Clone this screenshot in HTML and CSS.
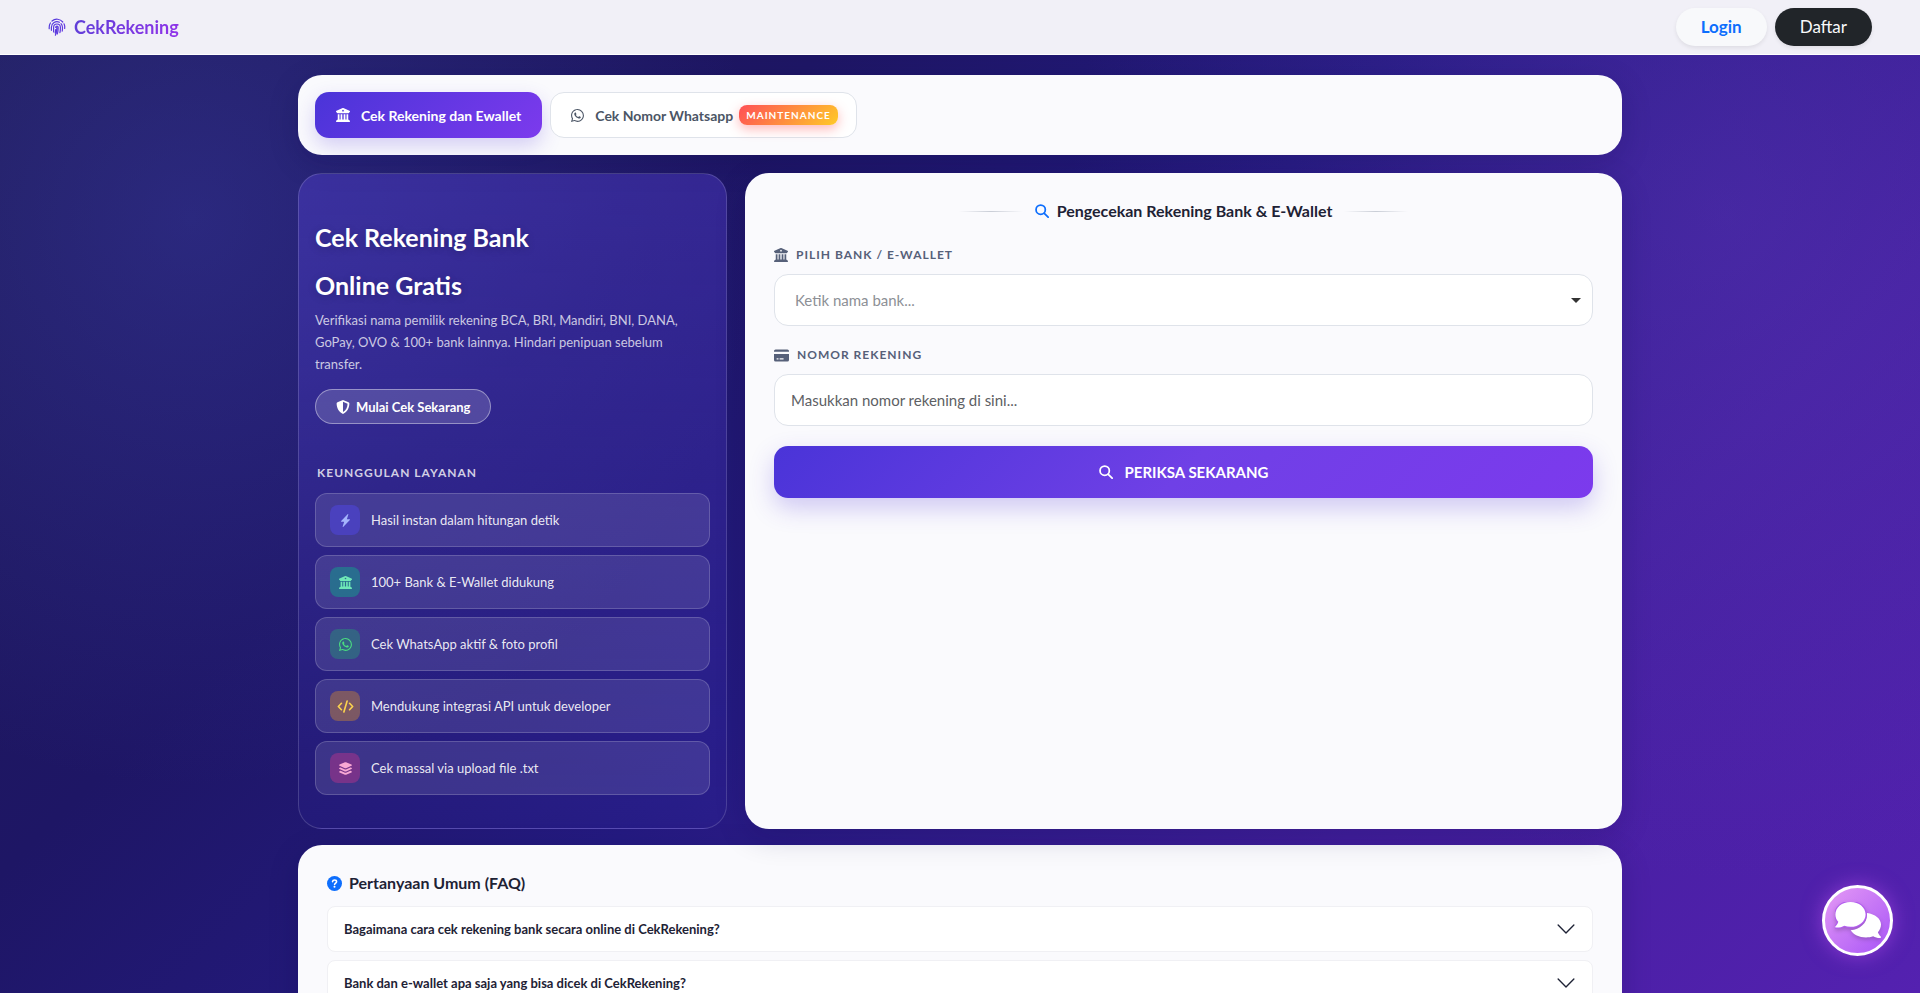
FILE: index.html
```
<!DOCTYPE html>
<html lang="id">
<head>
    <meta charset="UTF-8">
    <meta name="viewport" content="width=device-width, initial-scale=1.0">
    <title>CekRekening</title>
    <link rel="stylesheet" href="styles.css">
</head>
<body>
    <!-- icon set -->
    <svg class="sprite" aria-hidden="true">
        <defs>
            <linearGradient id="brandFill" gradientUnits="userSpaceOnUse" x1="0" y1="0" x2="60" y2="20">
                <stop offset="0" stop-color="#4f3bdb"/>
                <stop offset="1" stop-color="#9333ea"/>
            </linearGradient>
        </defs>
        <symbol id="i-bank" viewBox="0 0 512 512">
            <path d="M243.4 2.6l-224 96c-14 6-21.8 21-18.7 35.8S16.8 160 32 160v8c0 13.3 10.7 24 24 24H456c13.3 0 24-10.7 24-24v-8c15.2 0 28.3-10.7 31.3-25.6s-4.8-29.9-18.7-35.8l-224-96c-8-3.4-17.2-3.4-25.2 0zM128 224H64V420.3c-.6 .3-1.2 .7-1.8 1.1l-48 32c-11.7 7.8-17 22.4-12.9 35.9S17.9 512 32 512H480c14.1 0 26.5-9.2 30.6-22.7s-1.1-28.1-12.9-35.9l-48-32c-.6-.4-1.2-.7-1.8-1.1V224H384V416H344V224H280V416H232V224H168V416H128V224zM256 64a32 32 0 1 1 0 64 32 32 0 1 1 0-64z"/>
        </symbol>
        <symbol id="i-whatsapp" viewBox="0 0 16 16">
            <path d="M13.601 2.326A7.85 7.85 0 0 0 7.994 0C3.627 0 .068 3.558.064 7.926c0 1.399.366 2.76 1.057 3.965L0 16l4.204-1.102a7.9 7.9 0 0 0 3.79.965h.004c4.368 0 7.926-3.558 7.93-7.93A7.9 7.9 0 0 0 13.6 2.326zM7.994 14.521a6.6 6.6 0 0 1-3.356-.92l-.24-.144-2.494.654.666-2.433-.156-.251a6.56 6.56 0 0 1-1.007-3.505c0-3.626 2.957-6.584 6.591-6.584a6.56 6.56 0 0 1 4.66 1.931 6.56 6.56 0 0 1 1.928 4.66c-.004 3.639-2.961 6.592-6.592 6.592m3.615-4.934c-.197-.099-1.17-.578-1.353-.646-.182-.065-.315-.099-.445.099-.133.197-.513.646-.627.775-.114.133-.232.148-.43.05-.197-.1-.836-.308-1.592-.985-.59-.525-.985-1.175-1.103-1.372-.114-.198-.011-.304.088-.403.087-.088.197-.232.296-.346.1-.114.133-.198.198-.33.065-.134.034-.248-.015-.347-.05-.099-.445-1.076-.612-1.47-.16-.389-.323-.335-.445-.34-.114-.007-.247-.007-.38-.007a.73.73 0 0 0-.529.247c-.182.198-.691.677-.691 1.654s.71 1.916.81 2.049c.098.133 1.394 2.132 3.383 2.992.47.205.84.326 1.129.418.475.152.904.129 1.246.08.38-.058 1.171-.48 1.338-.943.164-.464.164-.86.114-.943-.049-.084-.182-.133-.38-.232z"/>
        </symbol>
        <symbol id="i-search" viewBox="0 0 16 16">
            <g fill="none" stroke="currentColor" stroke-width="2" stroke-linecap="round">
                <circle cx="6.5" cy="6.5" r="5.3"/>
                <path d="M10.6 10.6 15 15"/>
            </g>
        </symbol>
        <symbol id="i-shield" viewBox="0 0 16 16">
            <path fill-rule="evenodd" d="M8 0l6.3 2.6c.6.3 1 .8 1 1.500C15.200 8.700 13.300 13.500 8 16 2.700 13.500.8 8.700.7 4.100c0-.7.4-1.200 1-1.500zM8 2.100v11.600c3.700-2 5.100-5.600 5.200-9.400z"/>
        </symbol>
        <symbol id="i-bolt" viewBox="0 0 16 16">
            <path d="M11.251.068a.5.5 0 0 1 .227.58L9.677 6.5H13a.5.5 0 0 1 .364.843l-8 8.5a.5.5 0 0 1-.842-.49L6.323 9.5H3a.5.5 0 0 1-.364-.843l8-8.5a.5.5 0 0 1 .615-.09z"/>
        </symbol>
        <symbol id="i-code" viewBox="0 0 20 16">
            <path fill="none" stroke="currentColor" stroke-width="2" stroke-linecap="round" stroke-linejoin="round" d="M5 4 1.200 8 5 12M15 4l3.800 4-3.800 4M12 1.200 8 14.800"/>
        </symbol>
        <symbol id="i-layers" viewBox="0 0 16 16">
            <path d="M7.300.3a2 2 0 0 1 1.400 0l6.600 2.900a.8.8 0 0 1 0 1.500L8.700 7.600a2 2 0 0 1-1.400 0L.7 4.700a.8.8 0 0 1 0-1.500z"/>
            <path d="m1.900 6.700-1.200.5a.8.8 0 0 0 0 1.500l6.600 2.900a2 2 0 0 0 1.400 0l6.600-2.900a.8.8 0 0 0 0-1.500l-1.200-.5L9.300 8.900a3.200 3.200 0 0 1-2.600 0z"/>
            <path d="m1.900 10.800-1.200.5a.8.8 0 0 0 0 1.500l6.600 2.900a2 2 0 0 0 1.400 0l6.600-2.900a.8.8 0 0 0 0-1.500l-1.200-.5L9.300 13a3.200 3.200 0 0 1-2.600 0z"/>
        </symbol>
        <symbol id="i-card" viewBox="0 0 16 16">
            <path fill-rule="evenodd" d="M0 4V3.200A1.700 1.700 0 0 1 1.700 1.500h12.600A1.700 1.700 0 0 1 16 3.200V4zM0 6.500h16v6.300a1.700 1.700 0 0 1-1.700 1.700H1.700A1.700 1.700 0 0 1 0 12.800zM2.800 11v1.200h2V11zm3.200 0v1.200h4.200V11z"/>
        </symbol>
        <symbol id="i-question" viewBox="0 0 16 16">
            <circle cx="8" cy="8" r="8"/>
            <path fill="none" stroke="#fff" stroke-width="1.700" stroke-linecap="round" d="M5.900 6.100c.2-1.400 1.100-1.900 2.200-1.900 1.200 0 2.100.7 2.100 1.800 0 1.400-1.900 1.500-2.100 2.900"/>
            <circle cx="8" cy="11.500" r="1.100" fill="#fff"/>
        </symbol>
        <symbol id="i-fingerprint" viewBox="0 0 18 18">
            <g fill="none" stroke="url(#brandFill)" stroke-width="1.200" stroke-linecap="round">
                <path d="M4 3A7.600 7.600 0 0 1 14.800 4M2.400 5A7.600 7.600 0 0 0 1.200 9.500v1.200M16 5.800a7.600 7.600 0 0 1 .7 4.700"/>
                <path d="M3.400 12.300V9.300a5.600 5.600 0 0 1 8-5M13 5.600a5.600 5.600 0 0 1 1.500 4c0 1.300 0 2.300-.3 3.500"/>
                <path d="M5.600 14V9.400a3.400 3.400 0 0 1 6.800 0c0 2 0 3.500-.5 5.300M7.700 9.400c0-1.700 2.500-1.700 2.500 0 0 2.400-.2 4.400-.9 6.600M8.900 9.600c0 3-.5 5.500-1.500 7.600M7.600 11.500c0 1.300-.1 2.400-.4 3.500"/>
            </g>
        </symbol>
        <symbol id="i-chat" viewBox="0 0 46 37">
            <path d="M32 13c0 8-7 14.500-16.300 15.200C18.400 32.500 24.200 35.400 31 35.400c2.600 0 5.100-.4 7.200-1.200 2 1.200 4.400 1.900 7 1.800.8 0 1-.9.500-1.400-1.500-1.500-2.400-3.100-2.800-4.400 2-2.200 3.100-4.800 3.100-7.700C46 16.700 40 12 32 11z"/>
            <path stroke="#b35cf0" stroke-width="2.400" paint-order="stroke" d="M15.500 0C24 0 30.600 5.500 30.600 12.400S24 24.800 15.500 24.800c-2.200 0-4.300-.4-6.200-1.100C7 25 4.400 25.700 1 25.600c-.8 0-1-.9-.5-1.400 1.500-1.500 2.400-3 2.800-4.500C1.400 17.700.4 15.200.4 12.400.400 5.500 7 0 15.500 0z"/>
        </symbol>
        <symbol id="i-chevron" viewBox="0 0 16 16">
            <path fill="none" stroke="currentColor" stroke-width="1.200" stroke-linecap="round" stroke-linejoin="round" d="m1 4.500 7 7 7-7"/>
        </symbol>
    </svg>

    <header class="navbar">
        <a class="brand" href="#">
            <svg class="brand-icon"><use href="#i-fingerprint"/></svg>
            <span>CekRekening</span>
        </a>
        <nav class="nav-actions">
            <a class="btn-pill btn-login" href="#">Login</a>
            <a class="btn-pill btn-daftar" href="#">Daftar</a>
        </nav>
    </header>

    <main class="container">
        <div class="tabs card">
            <button type="button" class="tab active">
                <svg class="icon"><use href="#i-bank"/></svg>
                <span>Cek Rekening dan Ewallet</span>
            </button>
            <button type="button" class="tab">
                <svg class="icon icon-thin"><use href="#i-whatsapp"/></svg>
                <span>Cek Nomor Whatsapp</span>
                <span class="badge">MAINTENANCE</span>
            </button>
        </div>

        <div class="main-grid">
            <section class="hero">
                <h1>Cek Rekening Bank<br>Online Gratis</h1>
                <p>Verifikasi nama pemilik rekening BCA, BRI, Mandiri, BNI, DANA, GoPay, OVO &amp; 100+ bank lainnya. Hindari penipuan sebelum transfer.</p>
                <a class="hero-btn" href="#formCek">
                    <svg class="icon"><use href="#i-shield"/></svg>
                    Mulai Cek Sekarang
                </a>

                <h2>KEUNGGULAN LAYANAN</h2>
                <ul class="features">
                    <li>
                        <span class="feature-icon indigo"><svg><use href="#i-bolt"/></svg></span>
                        Hasil instan dalam hitungan detik
                    </li>
                    <li>
                        <span class="feature-icon teal"><svg><use href="#i-bank"/></svg></span>
                        100+ Bank &amp; E-Wallet didukung
                    </li>
                    <li>
                        <span class="feature-icon green"><svg><use href="#i-whatsapp"/></svg></span>
                        Cek WhatsApp aktif &amp; foto profil
                    </li>
                    <li>
                        <span class="feature-icon amber"><svg class="wide"><use href="#i-code"/></svg></span>
                        Mendukung integrasi API untuk developer
                    </li>
                    <li>
                        <span class="feature-icon pink"><svg><use href="#i-layers"/></svg></span>
                        Cek massal via upload file .txt
                    </li>
                </ul>
            </section>

            <form class="card check-form" id="formCek">
                <h2 class="form-title">
                    <svg class="icon"><use href="#i-search"/></svg>
                    Pengecekan Rekening Bank &amp; E-Wallet
                </h2>

                <label for="bank">
                    <svg class="icon"><use href="#i-bank"/></svg>
                    PILIH BANK / E-WALLET
                </label>
                <select id="bank">
                    <option>Ketik nama bank...</option>
                </select>

                <label for="norek">
                    <svg class="icon icon-card"><use href="#i-card"/></svg>
                    NOMOR REKENING
                </label>
                <input type="text" id="norek" inputmode="numeric" placeholder="Masukkan nomor rekening di sini...">

                <button type="submit" class="btn-submit">
                    <svg class="icon"><use href="#i-search"/></svg>
                    PERIKSA SEKARANG
                </button>
            </form>
        </div>

        <section class="card faq">
            <h2>
                <svg class="icon"><use href="#i-question"/></svg>
                Pertanyaan Umum (FAQ)
            </h2>
            <button type="button" class="faq-item">
                Bagaimana cara cek rekening bank secara online di CekRekening?
                <svg><use href="#i-chevron"/></svg>
            </button>
            <button type="button" class="faq-item">
                Bank dan e-wallet apa saja yang bisa dicek di CekRekening?
                <svg><use href="#i-chevron"/></svg>
            </button>
        </section>
    </main>

    <button type="button" class="chat-btn" aria-label="Chat">
        <svg><use href="#i-chat"/></svg>
    </button>
</body>
</html>
```
FILE: styles.css
```
:root {
    --indigo: #4a34d8;
    --violet: #7c3aed;
    --blue: #0d6efd;
    --dark: #1e2235;
    --muted: #566079;
    --line: #dfe3ea;
    --card: #fafafd;
}

* {
    box-sizing: border-box;
    margin: 0;
    padding: 0;
}

body {
    font-family: Lato, 'Open Sans', sans-serif;
    font-size: 13px;
    min-height: 100vh;
    color: var(--dark);
    background:
        radial-gradient(circle at 10% 22%, rgba(67, 70, 190, 0.35), transparent 30%),
        radial-gradient(circle at 90% 22%, rgba(96, 60, 190, 0.35), transparent 35%),
        linear-gradient(135deg, #1e1b55 0%, #1e1665 30%, #241a80 50%, #431f9e 75%, #5421b0 100%);
    background-attachment: fixed;
}

button, input, select {
    font: inherit;
    border: none;
}

button {
    cursor: pointer;
}

a {
    text-decoration: none;
}

svg {
    fill: currentColor;
    flex-shrink: 0;
}

.sprite {
    position: absolute;
    width: 0;
    height: 0;
}

.icon {
    width: 14px;
    height: 14px;
}

/* Navbar */
.navbar {
    position: sticky;
    top: 0;
    z-index: 10;
    display: flex;
    justify-content: space-between;
    align-items: center;
    height: 55px;
    padding: 0 48px;
    background: #f1f0f7;
    border-bottom: 1px solid #fff;
}

.brand {
    display: flex;
    align-items: center;
    gap: 8px;
    font-size: 18px;
    font-weight: bold;
}

.brand span {
    background: linear-gradient(135deg, #5b3fd6, #9333ea);
    -webkit-background-clip: text;
    background-clip: text;
    color: transparent;
}

.brand-icon {
    width: 18px;
    height: 18px;
}

.nav-actions {
    display: flex;
    gap: 8px;
}

.btn-pill {
    padding: 0 25px;
    line-height: 38px;
    border-radius: 19px;
    font-size: 17px;
    box-shadow: 0 2px 4px rgba(0, 0, 0, 0.08);
}

.btn-login {
    background: #f8f9fb;
    color: var(--blue);
    font-weight: bold;
}

.btn-daftar {
    background: #212529;
    color: #f8f9fa;
}

/* Layout */
.container {
    max-width: 1324px;
    margin: 0 auto;
    padding: 20px 0;
}

.card {
    background: var(--card);
    border-radius: 24px;
    box-shadow: 0 8px 30px rgba(15, 10, 70, 0.2);
}

.tabs {
    display: flex;
    gap: 8px;
    padding: 17px;
}

.tab {
    display: flex;
    align-items: center;
    height: 46px;
    padding: 0 18px 0 20px;
    border: 1px solid var(--line);
    border-radius: 14px;
    background: #fff;
    color: #4b5565;
    font-size: 14px;
    font-weight: bold;
}

.tab .icon {
    margin-right: 11px;
}

.tab .icon-thin {
    width: 13px;
    height: 13px;
}

.tab.active {
    padding: 0 21px;
    border: none;
    background: linear-gradient(135deg, var(--indigo), var(--violet));
    color: #fff;
    box-shadow: 0 8px 20px rgba(79, 52, 216, 0.22);
}

.badge {
    margin-left: 6px;
    padding: 0 7px;
    line-height: 20px;
    border-radius: 8px;
    background: linear-gradient(135deg, #ff4f56, #ffca28);
    color: #fff;
    font-size: 10px;
    letter-spacing: 1px;
    box-shadow: 0 4px 12px rgba(255, 77, 79, 0.4);
}

.main-grid {
    display: grid;
    grid-template-columns: 429fr 877fr;
    gap: 18px;
    margin: 18px 0 16px;
}

/* Hero */
.hero {
    padding: 39px 16px 33px;
    border: 1px solid rgba(255, 255, 255, 0.16);
    border-radius: 24px;
    color: #fff;
    background: linear-gradient(180deg, rgba(99, 75, 240, 0.32), rgba(60, 50, 190, 0.1));
}

.hero h1 {
    font-size: 25px;
    line-height: 48px;
    text-shadow: 0 2px 8px rgba(0, 0, 0, 0.2);
}

.hero p {
    line-height: 22px;
    color: rgba(255, 255, 255, 0.75);
}

.hero-btn {
    display: inline-flex;
    align-items: center;
    gap: 6px;
    height: 35px;
    margin: 14px 0 40px;
    padding: 0 20px;
    border: 1px solid rgba(255, 255, 255, 0.4);
    border-radius: 18px;
    background: rgba(255, 255, 255, 0.16);
    color: #fff;
    font-weight: bold;
}

.hero h2 {
    margin: 0 2px 11px;
    font-size: 12px;
    line-height: 18px;
    letter-spacing: 1px;
    color: rgba(255, 255, 255, 0.78);
}

.features {
    display: flex;
    flex-direction: column;
    gap: 8px;
    list-style: none;
}

.features li {
    display: flex;
    align-items: center;
    gap: 11px;
    padding: 11px 14px;
    border: 1px solid rgba(255, 255, 255, 0.18);
    border-radius: 12px;
    background: rgba(255, 255, 255, 0.11);
    color: rgba(255, 255, 255, 0.9);
}

.feature-icon {
    display: flex;
    align-items: center;
    justify-content: center;
    width: 30px;
    height: 30px;
    border-radius: 8px;
}

.feature-icon svg {
    width: 13px;
    height: 13px;
}

.feature-icon .wide {
    width: 17px;
}

.indigo {
    background: rgba(79, 70, 229, 0.5);
    color: #a5b4fc;
}

.teal {
    background: rgba(16, 160, 140, 0.5);
    color: #6ee7b7;
}

.green {
    background: rgba(37, 150, 120, 0.45);
    color: #4ade80;
}

.amber {
    background: rgba(200, 130, 50, 0.45);
    color: #fcd34d;
}

.pink {
    background: rgba(190, 50, 140, 0.45);
    color: #f9a8d4;
}

/* Form */
.check-form {
    display: flex;
    flex-direction: column;
    padding: 26px 29px;
}

.form-title {
    display: flex;
    align-items: center;
    justify-content: center;
    gap: 8px;
    margin-bottom: 21px;
    font-size: 16px;
    line-height: 24px;
}

.form-title .icon {
    color: var(--blue);
}

.form-title::before,
.form-title::after {
    content: '';
    width: 64px;
    height: 1px;
    margin: 0 4px;
    background: linear-gradient(90deg, transparent, #c9cdd6, transparent);
}

.check-form label {
    display: flex;
    align-items: center;
    gap: 8px;
    margin-bottom: 8px;
    font-size: 12px;
    line-height: 22px;
    font-weight: bold;
    letter-spacing: 1px;
    color: var(--muted);
}

.check-form .icon-card {
    width: 15px;
    height: 15px;
}

.check-form select,
.check-form input {
    width: 100%;
    height: 52px;
    border: 1px solid var(--line);
    border-radius: 14px;
    background-color: #fff;
    font-size: 15px;
}

.check-form select {
    margin-bottom: 18px;
    padding: 0 20px;
    appearance: none;
    color: #8d9096;
    background-image: url("data:image/svg+xml,%3Csvg xmlns='http://www.w3.org/2000/svg' viewBox='0 0 10 5'%3E%3Cpath fill='%23333' d='M0 0h10L5 5z'/%3E%3C/svg%3E");
    background-repeat: no-repeat;
    background-position: right 11px center;
    background-size: 10px 5px;
}

.check-form input {
    margin-bottom: 20px;
    padding: 0 16px;
}

.check-form input::placeholder {
    color: #5d6064;
    opacity: 1;
}

.btn-submit {
    display: flex;
    align-items: center;
    justify-content: center;
    gap: 12px;
    height: 52px;
    border-radius: 14px;
    background: linear-gradient(135deg, var(--indigo), #6f40e6 50%, var(--violet));
    color: #fff;
    font-size: 15px;
    font-weight: bold;
    box-shadow: 0 10px 25px rgba(79, 52, 216, 0.25);
}

/* FAQ */
.faq {
    display: flex;
    flex-direction: column;
    gap: 8px;
    padding: 26px 29px;
}

.faq h2 {
    display: flex;
    align-items: center;
    gap: 7px;
    margin-bottom: 3px;
    font-size: 16px;
    line-height: 24px;
}

.faq h2 .icon {
    width: 15px;
    height: 15px;
    color: var(--blue);
}

.faq-item {
    display: flex;
    align-items: center;
    justify-content: space-between;
    height: 46px;
    padding: 0 17px 0 16px;
    border: 1px solid #f0f0f4;
    border-radius: 8px;
    background: #fff;
    color: var(--dark);
    font-weight: bold;
    text-align: left;
}

.faq-item svg {
    width: 18px;
    height: 18px;
}

.chat-btn {
    position: fixed;
    right: 27px;
    bottom: 37px;
    display: flex;
    align-items: center;
    justify-content: center;
    width: 71px;
    height: 71px;
    border: 3px solid #fff;
    border-radius: 50%;
    background: linear-gradient(135deg, #e59af5, #a855f7);
    color: #fff;
    box-shadow: 0 0 20px rgba(192, 80, 240, 0.55);
}

.chat-btn svg {
    width: 46px;
    height: 37px;
    filter: drop-shadow(0 2px 2px rgba(0, 0, 0, 0.2));
}

@media (max-width: 900px) {
    .navbar {
        padding: 0 16px;
    }

    .container {
        padding: 16px;
    }

    .tabs {
        flex-wrap: wrap;
    }

    .main-grid {
        grid-template-columns: 1fr;
    }
}
```
